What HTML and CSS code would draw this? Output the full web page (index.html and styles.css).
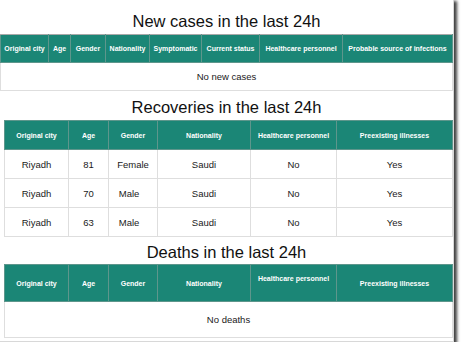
FILE: index.html
```html
<!DOCTYPE html>
<html>
<head>
<meta charset="utf-8">
<link rel="stylesheet" href="styles.css">
</head>
<body>
<div class="frame">
  <h2 class="title t1">New cases in the last 24h</h2>
  <table class="tbl tbl-new">
    <colgroup>
      <col style="width:48px"><col style="width:22px"><col style="width:35px"><col style="width:44px"><col style="width:52px"><col style="width:58px"><col style="width:83px"><col>
    </colgroup>
    <thead>
      <tr>
        <th>Original city</th><th>Age</th><th>Gender</th><th>Nationality</th><th>Symptomatic</th><th>Current status</th><th>Healthcare personnel</th><th>Probable source of infections</th>
      </tr>
    </thead>
    <tbody>
      <tr class="row-empty"><td colspan="8">No new cases</td></tr>
    </tbody>
  </table>

  <h2 class="title t2">Recoveries in the last 24h</h2>
  <table class="tbl tbl-rec">
    <colgroup>
      <col style="width:64px"><col style="width:40px"><col style="width:49px"><col style="width:93px"><col style="width:86px"><col>
    </colgroup>
    <thead>
      <tr>
        <th>Original city</th><th>Age</th><th>Gender</th><th>Nationality</th><th>Healthcare personnel</th><th>Preexisting illnesses</th>
      </tr>
    </thead>
    <tbody>
      <tr><td>Riyadh</td><td>81</td><td>Female</td><td>Saudi</td><td>No</td><td>Yes</td></tr>
      <tr><td>Riyadh</td><td>70</td><td>Male&nbsp;&nbsp;&nbsp;</td><td>Saudi</td><td>No</td><td>Yes</td></tr>
      <tr><td>Riyadh</td><td>63</td><td>Male&nbsp;&nbsp;&nbsp;</td><td>Saudi</td><td>No</td><td>Yes</td></tr>
    </tbody>
  </table>

  <h2 class="title t3">Deaths in the last 24h</h2>
  <table class="tbl tbl-death">
    <colgroup>
      <col style="width:64px"><col style="width:40px"><col style="width:49px"><col style="width:93px"><col style="width:86px"><col>
    </colgroup>
    <thead>
      <tr>
        <th>Original city</th><th>Age</th><th>Gender</th><th>Nationality</th><th class="th-top">Healthcare personnel</th><th>Preexisting illnesses</th>
      </tr>
    </thead>
    <tbody>
      <tr class="row-empty"><td colspan="6">No deaths</td></tr>
    </tbody>
  </table>
</div>
</body>
</html>
```

FILE: styles.css
```css
html, body {
  margin: 0;
  padding: 0;
  background: #ffffff;
}

.frame {
  width: 454px;
  height: 342px;
  background: #ffffff;
  box-shadow: 2px 2px 3px 1px rgba(0, 0, 0, 0.75);
  border-right: 1px solid #d8d8d8;
  border-bottom: 1px solid #d8d8d8;
  box-sizing: border-box;
  font-family: "Liberation Sans", Arial, sans-serif;
  overflow: hidden;
}

.title {
  margin: 0;
  font-size: 16.5px;
  font-weight: normal;
  line-height: 20px;
  text-align: center;
  color: #111;
}

.t1 { padding-top: 11px; margin-bottom: 3px; }
.t2 { margin-top: 6px; margin-bottom: 3px; }
.t3 { margin-top: 5px; margin-bottom: 2px; }

.tbl {
  border-collapse: collapse;
  table-layout: fixed;
  background: #fff;
}

.tbl-new {
  width: 453px;
  margin-left: 0;
}

.tbl-rec, .tbl-death {
  width: 449px;
  margin-left: 4px;
}

.tbl th {
  background: #1b8676;
  color: #ffffff;
  font-size: 7px;
  font-weight: bold;
  text-align: center;
  vertical-align: middle;
  padding: 0 2px;
  border: 1px solid #5e968c;
  white-space: nowrap;
}

.tbl-new th {
  height: 27px;
  border-top-color: #a9a9a9;
}

.tbl-rec th {
  height: 28px;
}

.tbl-death th {
  height: 36px;
}

.tbl-death th.th-top {
  vertical-align: top;
  padding-top: 10px;
  height: 26px;
}

.tbl td {
  font-size: 9.5px;
  color: #1a1a1a;
  text-align: center;
  vertical-align: middle;
  border: 1px solid #dedede;
  padding: 0 2px;
}

.tbl-rec td {
  height: 28px;
}

.tbl-new .row-empty td {
  height: 27px;
}

.tbl-death .row-empty td {
  height: 35px;
}
```
